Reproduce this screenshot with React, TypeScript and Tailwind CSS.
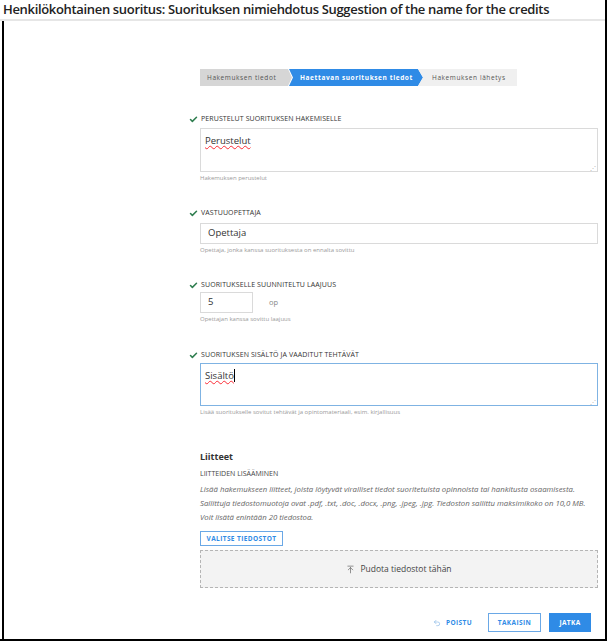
import { ArrowUpToLine, Check, Undo2 } from "lucide-react";

const font = { fontFamily: "'Open Sans', 'Noto Sans', sans-serif" };

function FieldLabel({ text }: { text: string }) {
  return (
    <div className="-ml-[11px] flex h-[12px] items-center gap-[3px]">
      <Check className="h-[9px] w-[9px] text-[#2e7d4f]" strokeWidth={4} />
      <span className="text-[7px] uppercase tracking-[0.1px] text-[#333]">{text}</span>
    </div>
  );
}

function Help({ text }: { text: string }) {
  return <div className="mt-[2px] text-[6px] leading-[9px] text-[#9a9a9a]">{text}</div>;
}

export default function App() {
  return (
    <div
      className="h-[643px] w-[610px] overflow-hidden bg-white text-[#333]"
      style={font}
    >
      <div className="h-[641px] w-[607px] border-r-2 border-b-2 border-black">
        <h1 className="h-[21px] whitespace-nowrap border-b-2 border-[#e6e6e6] pl-[3px] text-[13px] leading-[19px] font-semibold tracking-[-0.33px] text-[#222]">
          Henkilökohtainen suoritus: Suorituksen nimiehdotus Suggestion of the name for the credits
        </h1>
        <div className="ml-[2px] h-[618px] border-l-2 border-black pt-[48px] pl-[196px] pr-[7px]">
          {/* stepper */}
          <div className="flex h-[17px] text-[6.5px] tracking-[0.6px]">
            <div className="flex w-[92px] items-center bg-[#d6d6d6] pl-[7px] text-[#555] [clip-path:polygon(0_0,calc(100%-4px)_0,100%_50%,calc(100%-4px)_100%,0_100%)]">
              Hakemuksen tiedot
            </div>
            <div className="-ml-[3px] flex w-[134px] items-center bg-[#2f8be6] pl-[11px] font-bold text-white [clip-path:polygon(0_0,calc(100%-5px)_0,100%_50%,calc(100%-5px)_100%,0_100%,4px_50%)]">
              Haettavan suorituksen tiedot
            </div>
            <div className="-ml-[5px] flex w-[99px] items-center bg-[#f0f0f0] pl-[14px] text-[#555] [clip-path:polygon(0_0,100%_0,100%_100%,0_100%,5px_50%)]">
              Hakemuksen lähetys
            </div>
          </div>

          <div className="mt-[27px]">
            <FieldLabel text="Perustelut suorituksen hakemiselle" />
            <div className="relative mt-[3px] h-[44px] border border-[#dadada] px-[4px] pt-[5px] text-[9.5px]">
              <span className="underline decoration-wavy decoration-red-500 decoration-[0.5px]">Perustelut</span>
              <span className="absolute right-[1px] bottom-[0px] text-[6px] leading-[6px] text-[#aaa]">⋰</span>
            </div>
            <Help text="Hakemuksen perustelut" />
          </div>

          <div className="mt-[24px]">
            <FieldLabel text="Vastuuopettaja" />
            <div className="mt-[4px] flex h-[21px] items-center border border-[#dadada] px-[7px] text-[9.5px]">
              Opettaja
            </div>
            <Help text="Opettaja, jonka kanssa suorituksesta on ennalta sovittu" />
          </div>

          <div className="mt-[24px]">
            <FieldLabel text="Suoritukselle suunniteltu laajuus" />
            <div className="mt-[1px] flex items-center">
              <div className="flex h-[21px] w-[53px] items-center border border-[#dadada] px-[7px] text-[9.5px]">
                5
              </div>
              <span className="ml-[16px] text-[7.5px] text-[#888]">op</span>
            </div>
            <Help text="Opettajan kanssa sovittu laajuus" />
          </div>

          <div className="mt-[25px]">
            <FieldLabel text="Suorituksen sisältö ja vaaditut tehtävät" />
            <div className="relative mt-[2px] h-[43px] border border-[#7fb3e3] px-[4px] pt-[5px] text-[9.5px]">
              <span className="underline decoration-wavy decoration-red-500 decoration-[0.5px]">Sisältö</span>
              <span className="border-l border-black" />
              <span className="absolute right-[1px] bottom-[0px] text-[6px] leading-[6px] text-[#aaa]">⋰</span>
            </div>
            <Help text="Lisää suoritukselle sovitut tehtävät ja opintomateriaali, esim. kirjallisuus" />
          </div>

          <div className="mt-[33px]">
            <div className="text-[9px] leading-[14px] font-bold text-[#333]">Liitteet</div>
            <div className="mt-[5px] text-[7px] leading-[10px] uppercase text-[#444]">Liitteiden lisääminen</div>
            <p className="mt-[4px] whitespace-nowrap text-[7.8px] leading-[13.8px] text-[#666] italic">
              Lisää hakemukseen liitteet, joista löytyvät viralliset tiedot suoritetuista opinnoista tai hankitusta osaamisesta.
              <br />
              Sallittuja tiedostomuotoja ovat .pdf, .txt, .doc, .docx, .png, .jpeg, .jpg. Tiedoston sallittu maksimikoko on 10,0 MB.
              <br />
              Voit lisätä enintään 20 tiedostoa.
            </p>
            <button className="mt-[7px] flex h-[15px] w-[83px] items-center justify-center border border-[#6aa8e6] text-[6.5px] font-bold tracking-[0.4px] text-[#2f8be6]">
              VALITSE TIEDOSTOT
            </button>
            <div className="mt-[4px] flex h-[38px] items-center justify-center gap-[5px] border border-dashed border-[#b5b5b5] bg-[#f3f3f3] text-[8.5px] text-[#444]">
              <ArrowUpToLine className="h-[9px] w-[9px]" strokeWidth={1.5} />
              Pudota tiedostot tähän
            </div>
          </div>

          <div className="mt-[25px] flex items-center justify-end gap-[8px] pr-[7px]">
            <button className="mr-[8px] flex items-center gap-[5px] text-[6.5px] font-bold tracking-[0.4px] text-[#2f8be6]">
              <Undo2 className="h-[8px] w-[8px] text-[#8ab8e6]" strokeWidth={2} />
              POISTU
            </button>
            <button className="flex h-[19px] w-[53px] items-center justify-center border border-[#6aa8e6] text-[6.5px] font-bold tracking-[0.4px] text-[#2f8be6]">
              TAKAISIN
            </button>
            <button className="flex h-[19px] w-[42px] items-center justify-center bg-[#2f8be6] text-[6.5px] font-bold tracking-[0.4px] text-white">
              JATKA
            </button>
          </div>
        </div>
      </div>
    </div>
  );
}
